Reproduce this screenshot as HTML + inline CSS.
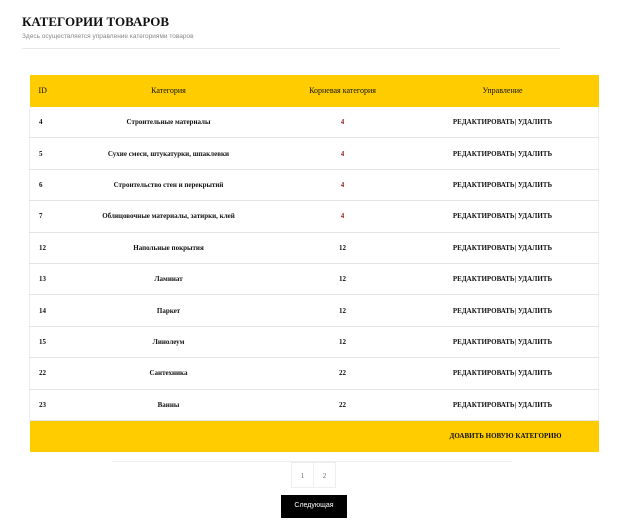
<!DOCTYPE html>
<html><head><meta charset="utf-8"><style>
body{margin:0;width:623px;height:526px;background:#fff;font-family:"Liberation Serif",serif;position:relative;overflow:hidden}
h1{position:absolute;left:22px;top:14px;margin:0;font-size:13px;font-weight:bold;color:#111}
.sub{position:absolute;left:22px;top:33px;font-family:"Liberation Sans",sans-serif;font-size:6.5px;color:#888}
.hr{position:absolute;left:22px;top:48px;width:538px;height:1px;background:#e6e6e6}
table{position:absolute;left:29px;top:75px;width:569px;border-collapse:collapse;table-layout:fixed}
td{font-size:7px;color:#111;text-align:center;padding:0;height:30.4px;border-bottom:1px solid #e4e4e4;line-height:8px}
tr.h td{background:#ffcc00;height:32px;font-weight:normal;font-size:8px;border:none}
tr.b td{font-weight:bold}
tr.b td:first-child{border-left:1px solid #eee}
tr.b td:last-child{border-right:1px solid #eee}
td.id{text-align:left;padding-left:9px}
td.r{color:#8b1a1a}
tr.f td{background:#ffcc00;height:31px;font-weight:bold;border:none}
.pl{position:absolute;left:112px;top:461px;width:400px;height:1px;background:#eee}
.pg{position:absolute;top:462px;width:23px;height:26px;border:1px solid #eee;font-size:7px;color:#666;text-align:center;line-height:26px;box-sizing:border-box}
.btn{position:absolute;left:281px;top:495px;width:66px;height:23px;background:#000;color:#fff;font-family:"Liberation Sans",sans-serif;font-size:7px;text-align:center;line-height:22px}
</style></head><body>
<h1>КАТЕГОРИИ ТОВАРОВ</h1>
<div class="sub">Здесь осуществляется управление категориями товаров</div>
<div class="hr"></div>
<table>
<colgroup><col style="width:66px"><col style="width:146px"><col style="width:202px"><col style="width:118px"><col style="width:37px"></colgroup>
<tr class="h"><td class="id">ID</td><td>Категория</td><td>Корневая категория</td><td>Управление</td><td></td></tr>
<tr class="b"><td class="id">4</td><td>Строительные материалы</td><td class="r">4</td><td>РЕДАКТИРОВАТЬ| УДАЛИТЬ</td><td></td></tr>
<tr class="b"><td class="id">5</td><td>Сухие смеси, штукатурки, шпаклевки</td><td class="r">4</td><td>РЕДАКТИРОВАТЬ| УДАЛИТЬ</td><td></td></tr>
<tr class="b"><td class="id">6</td><td>Строительство стен и перекрытий</td><td class="r">4</td><td>РЕДАКТИРОВАТЬ| УДАЛИТЬ</td><td></td></tr>
<tr class="b"><td class="id">7</td><td>Облицовочные материалы, затирки, клей</td><td class="r">4</td><td>РЕДАКТИРОВАТЬ| УДАЛИТЬ</td><td></td></tr>
<tr class="b"><td class="id">12</td><td>Напольные покрытия</td><td>12</td><td>РЕДАКТИРОВАТЬ| УДАЛИТЬ</td><td></td></tr>
<tr class="b"><td class="id">13</td><td>Ламинат</td><td>12</td><td>РЕДАКТИРОВАТЬ| УДАЛИТЬ</td><td></td></tr>
<tr class="b"><td class="id">14</td><td>Паркет</td><td>12</td><td>РЕДАКТИРОВАТЬ| УДАЛИТЬ</td><td></td></tr>
<tr class="b"><td class="id">15</td><td>Линолеум</td><td>12</td><td>РЕДАКТИРОВАТЬ| УДАЛИТЬ</td><td></td></tr>
<tr class="b"><td class="id">22</td><td>Сантехника</td><td>22</td><td>РЕДАКТИРОВАТЬ| УДАЛИТЬ</td><td></td></tr>
<tr class="b"><td class="id">23</td><td>Ванны</td><td>22</td><td>РЕДАКТИРОВАТЬ| УДАЛИТЬ</td><td></td></tr>
<tr class="f"><td></td><td></td><td></td><td colspan="2" style="text-align:left;padding-left:6px">ДОАВИТЬ НОВУЮ КАТЕГОРИЮ</td></tr>
</table>
<div class="pl"></div>
<div class="pg" style="left:291px">1</div>
<div class="pg" style="left:313px">2</div>
<div class="btn">Следующая</div>
</body></html>
